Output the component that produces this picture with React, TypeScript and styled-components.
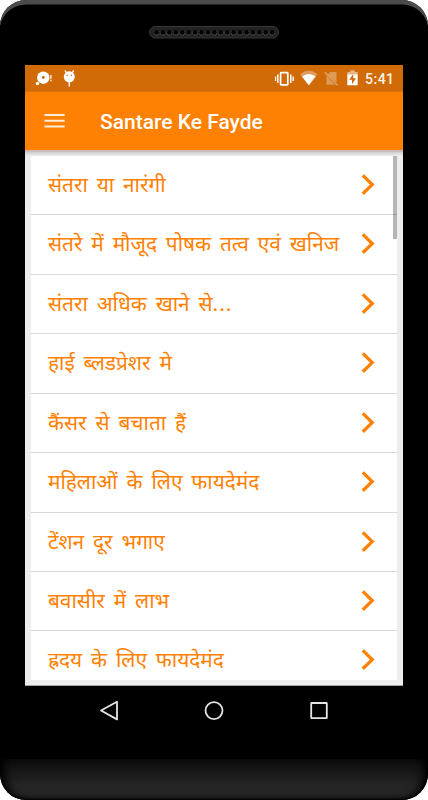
import React from 'react';
import styled, { createGlobalStyle } from 'styled-components';

const ORANGE = '#ff8103';

const GlobalStyle = createGlobalStyle`
  *, *::before, *::after { box-sizing: border-box; }
  html, body { margin: 0; padding: 0; background: #fff; }
`;

const Phone = styled.div`
  width: 428px;
  height: 800px;
  display: flex;
  flex-direction: column;
  align-items: center;
  background: #000;
  border-radius: 26px;
  overflow: hidden;
  box-shadow: inset 0 5px 0 -0.5px #4b4b4b;
`;

const Forehead = styled.div`
  flex: none;
  width: 100%;
  height: 65px;
  padding-top: 26px;
  display: flex;
  justify-content: center;
`;

const Speaker = styled.svg`
  display: block;
  width: 130px;
  height: 13px;
`;

const Screen = styled.main`
  flex: none;
  width: 378px;
  height: 621px;
  display: flex;
  flex-direction: column;
  background: #ededed;
  border-bottom: 1px solid #a5a5a5;
`;

const StatusBar = styled.div`
  flex: none;
  height: 27px;
  display: flex;
  justify-content: space-between;
  background: #d06b08;
  border-bottom: 1px solid #d97109;
`;

const StatusIcons = styled.svg<{ $width: number }>`
  display: block;
  width: ${(p) => p.$width}px;
  height: 26px;
`;

const StatusRight = styled.div`
  display: flex;
  padding-right: 9px;
`;

const Clock = styled.span`
  width: 29px;
  font: 500 14px/28px Roboto, sans-serif;
  color: #fff3e6;
  white-space: nowrap;
  letter-spacing: 0.5px;
`;

const Toolbar = styled.header`
  flex: none;
  height: 58px;
  display: flex;
  align-items: center;
  padding-left: 19px;
  background: ${ORANGE};
`;

const MenuIcon = styled.svg`
  width: 21px;
  height: 16px;
  margin-right: 35px;
`;

const Title = styled.h1`
  margin: 0;
  padding-top: 1px;
  font: 500 21px/24px Roboto, sans-serif;
  color: #fff;
  white-space: nowrap;
`;

const ToolbarShadow = styled.div`
  flex: none;
  height: 6px;
  background: linear-gradient(#d5b6ac 0 1px, #b5b5b5 1px, #cecece 2px, #dedede 4px, #ededed);
`;

const ListFrame = styled.div`
  position: relative;
  width: 366px;
  height: 524px;
  margin-left: 6px;
  overflow: hidden;
  background: #fff;
`;

const List = styled.ul`
  margin: 0;
  padding: 0;
  list-style: none;
`;

const Row = styled.li<{ $height: number }>`
  height: ${(p) => p.$height}px;
  display: flex;
  justify-content: space-between;
  padding: 14px 22px 0 17px;
  border-bottom: 1px solid #d9d9d9;
`;

const Label = styled.span`
  font: 400 20.8px/28px "Noto Sans", "Noto Sans Devanagari", sans-serif;
  color: ${ORANGE};
  white-space: nowrap;
  word-spacing: 3.5px;
`;

const Ellipsis = styled.span`
  letter-spacing: 1px;
`;

const Chevron = styled.svg`
  flex: none;
  width: 14px;
  height: 22px;
  margin-top: 4px;
`;

const ScrollThumb = styled.div`
  position: absolute;
  top: 0;
  right: 0;
  width: 4px;
  height: 83px;
  background: rgba(0, 0, 0, 0.29);
`;

const NavBar = styled.nav`
  flex: none;
  width: 100%;
  height: 73px;
  display: flex;
  justify-content: space-between;
  padding: 14px 99px 0 99px;
`;

const NavIcon = styled.svg`
  width: 20px;
  height: 22px;
`;

const Chin = styled.div`
  flex: none;
  width: 100%;
  height: 41px;
  border-radius: 0 0 26px 26px;
  background: linear-gradient(#0c0c0c, #191919 35%, #252525 65%, #252525 85%, #181818);
  box-shadow: inset 0 -1px 2px #000, inset 10px 0 10px -5px #000, inset -10px 0 10px -5px #000;
`;

const items = [
  { text: 'संतरा या नारंगी', height: 59 },
  { text: 'संतरे में मौजूद पोषक तत्व एवं खनिज', height: 60 },
  { text: 'संतरा अधिक खाने से', truncated: true, height: 59 },
  { text: 'हाई ब्लडप्रेशर मे', height: 60 },
  { text: 'कैंसर से बचाता हैं', height: 59 },
  { text: 'महिलाओं के लिए फायदेमंद', height: 60 },
  { text: 'टेंशन दूर भगाए', height: 59 },
  { text: 'बवासीर में लाभ', height: 59 },
  { text: 'ह्रदय के लिए फायदेमंद', height: 60 },
];

function SpeakerGrille() {
  return (
    <Speaker viewBox="0 0 130 13">
      <rect x="0.5" y="0.5" width="129" height="11.5" rx="5.75" fill="#222" stroke="#373737" />
      {Array.from({ length: 19 }, (_, i) => (
        <g key={i}>
          <circle cx={7.5 + i * 6.43} cy="7" r="2.7" fill="#474747" />
          <circle cx={7.5 + i * 6.43} cy="6.4" r="2.3" fill="#000" />
        </g>
      ))}
    </Speaker>
  );
}

function NotificationIcons() {
  return (
    <StatusIcons $width={60} viewBox="0 0 60 26" fill="#fff">
      <circle cx="18.3" cy="12.7" r="6.2" />
      <circle cx="18.3" cy="12.5" r="1.4" fill="#c46710" />
      <circle cx="12.5" cy="18.5" r="1.7" />
      <path d="M25.1 10h1.5v3.7h-1.5zM25.1 14.7h1.5v1.5h-1.5z" opacity=".85" />
      <circle cx="44.3" cy="11.8" r="5.5" />
      <path d="M40 5.5l2 3M48.7 5.5l-2 3M44.3 17v4.5" stroke="#fff" strokeWidth="1.4" />
      <circle cx="42.2" cy="10.3" r=".7" fill="#c46710" />
      <circle cx="46.4" cy="10.3" r=".7" fill="#c46710" />
    </StatusIcons>
  );
}

function SystemIcons() {
  return (
    <StatusIcons $width={90} viewBox="275 65 90 26" fill="#fff">
      <rect x="280.6" y="72.6" width="7.2" height="12.2" rx=".6" fill="none" stroke="#fff" strokeWidth="1.7" />
      <path d="M277.8 74.5v8.5M290.8 74.5v8.5M275.4 76.5v4.5M293.2 76.5v4.5" stroke="#fff" strokeWidth="1.5" />
      <path d="M300 74.2Q308.7 67 317.6 74.2L308.8 85.2Z" opacity=".35" />
      <path d="M302 76.5Q308.7 71.4 315.6 76.5L308.8 85.2Z" />
      <path d="M330.5 72H336.5V82.5L327.8 74.3ZM326.5 75.5L335 84.8H326.5Z" opacity=".32" />
      <path d="M324.7 72L337.5 85.3" stroke="#fff" strokeWidth="1.4" opacity=".38" />
      <path d="M347.3 72h3v-1.8h4.4V72h3v2.2h-10.4z" opacity=".5" />
      <path d="M347.3 74.2h10.4v11h-10.4z" />
      <path d="M353.2 74l-4 5.7h2.8v4.5l4-6h-2.8z" fill="#d06b08" />
    </StatusIcons>
  );
}

export default function App() {
  return (
    <>
      <GlobalStyle />
      <Phone>
        <Forehead>
          <SpeakerGrille />
        </Forehead>
        <Screen>
          <StatusBar>
            <NotificationIcons />
            <StatusRight>
              <SystemIcons />
              <Clock>5:41</Clock>
            </StatusRight>
          </StatusBar>
          <Toolbar>
            <MenuIcon viewBox="0 0 21 16" fill="#ffeedd">
              <path d="M.5 1h20.2v2H.5zM.5 6.8h20.2v2H.5zM.5 12.5h20.2v2H.5z" />
            </MenuIcon>
            <Title>Santare Ke Fayde</Title>
          </Toolbar>
          <ToolbarShadow />
          <ListFrame>
            <List>
              {items.map((item) => (
                <Row key={item.text} $height={item.height}>
                  <Label>
                    {item.text}
                    {item.truncated && <Ellipsis>...</Ellipsis>}
                  </Label>
                  <Chevron viewBox="0 0 14 22">
                    <path d="M1.8 1.4L11.2 10.6L1.8 19.8" fill="none" stroke={ORANGE} strokeWidth="3.3" />
                  </Chevron>
                </Row>
              ))}
            </List>
            <ScrollThumb />
          </ListFrame>
        </Screen>
        <NavBar>
          <NavIcon viewBox="99 700 20 22">
            <path d="M101 710.5L117 701.7V719.4Z" fill="none" stroke="#e4e4e4" strokeWidth="1.8" strokeLinejoin="round" />
          </NavIcon>
          <NavIcon viewBox="204 700 20 22">
            <circle cx="214" cy="710.6" r="8.5" fill="none" stroke="#e4e4e4" strokeWidth="1.8" />
          </NavIcon>
          <NavIcon viewBox="309 700 20 22">
            <rect x="311.2" y="703" width="15.6" height="15.2" rx=".4" fill="none" stroke="#e4e4e4" strokeWidth="1.8" />
          </NavIcon>
        </NavBar>
        <Chin />
      </Phone>
    </>
  );
}
